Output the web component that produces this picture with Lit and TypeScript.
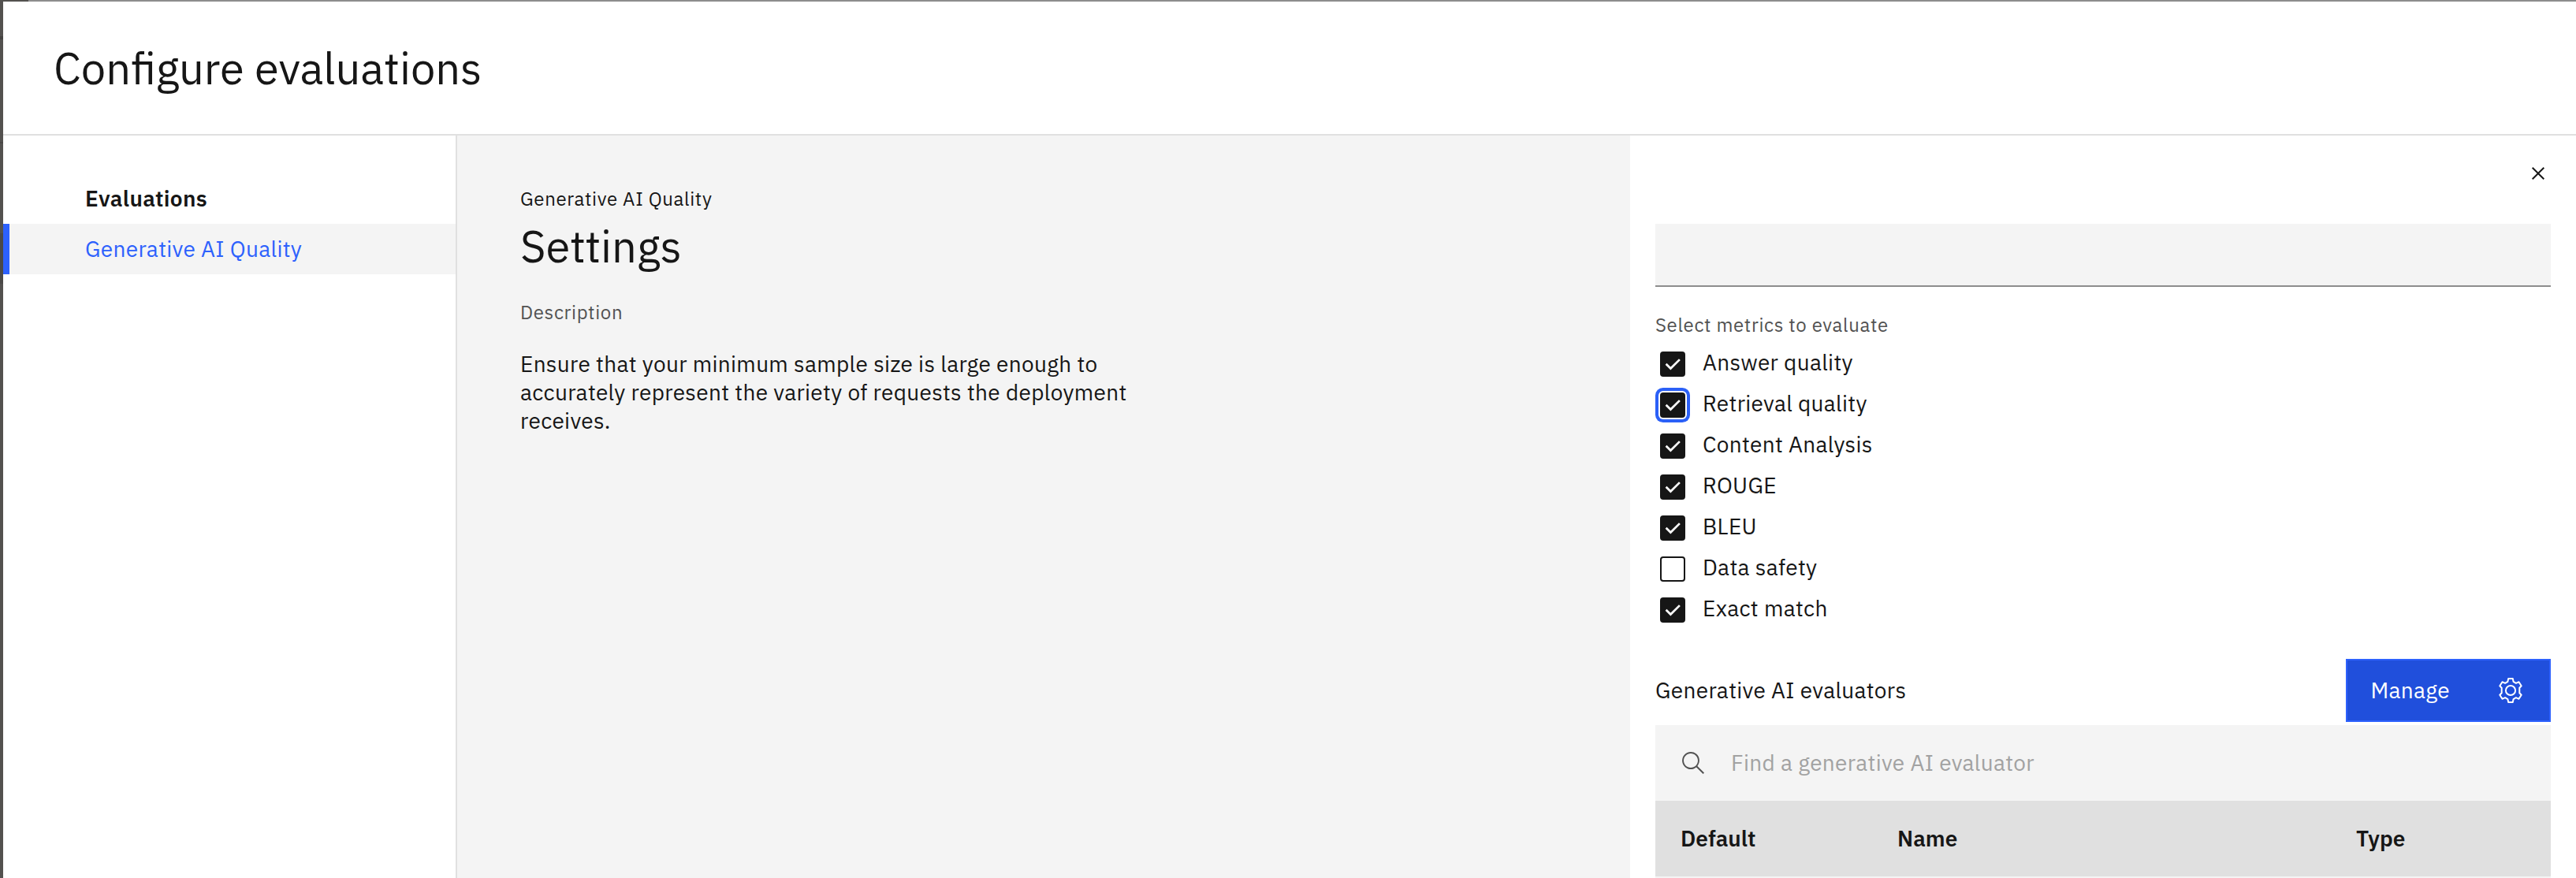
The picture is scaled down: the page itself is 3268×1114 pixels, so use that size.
import { LitElement, html, css } from "lit";

interface Metric {
  label: string;
  checked: boolean;
  focused?: boolean;
}

class MetricCheckbox extends LitElement {
  static properties = {
    label: { type: String },
    checked: { type: Boolean },
    focused: { type: Boolean },
  };
  declare label: string;
  declare checked: boolean;
  declare focused: boolean;

  static styles = css`
    :host {
      display: flex;
      height: 52px;
      padding-left: 6px;
    }
    .box {
      box-sizing: border-box;
      width: 32px;
      height: 32px;
      margin-top: 10px;
      border: 2px solid #161616;
      border-radius: 4px;
      background: #fff;
    }
    .box.on {
      background: #161616;
    }
    .box.focus {
      box-shadow: 0 0 0 2px #fff, 0 0 0 6px #2b60f7;
    }
    .tick {
      display: block;
      width: 28px;
      height: 28px;
      fill: none;
      stroke: #fff;
      stroke-width: 2.7;
    }
    .label {
      margin: 6px 0 0 22px;
      line-height: 35px;
    }
  `;

  render() {
    return html`
      <span class="box ${this.checked ? "on" : ""} ${this.focused ? "focus" : ""}">
        ${this.checked
          ? html`<svg class="tick" viewBox="0 0 28 28"><path d="M5.6 13.8 11.4 19.5 22.9 8.1"></path></svg>`
          : ""}
      </span>
      <span class="label">${this.label}</span>
    `;
  }
}
customElements.define("metric-checkbox", MetricCheckbox);

class AppRoot extends LitElement {
  static styles = css`
    :host {
      display: block;
      height: 1114px;
      overflow: hidden;
      background: #53514f;
      color: #161616;
      font-family: "IBM Plex Sans", "Open Sans", sans-serif;
      font-size: 28px;
      line-height: 36px;
      letter-spacing: 0.32px;
    }
    .frame {
      display: flex;
      height: 1114px;
    }
    .edge {
      flex: none;
      display: flex;
      flex-direction: column;
      width: 4px;
      overflow: hidden;
      background: #53514f;
    }
    .rule {
      flex: none;
      height: 4px;
      margin-top: 46px;
      background: #454341;
    }
    .rule.thin {
      height: 2px;
      margin-top: 130px;
      background: #494745;
    }
    .band {
      flex: none;
      height: 64px;
      margin-top: 114px;
      background: #4b4947;
    }
    .dialog {
      flex: 1;
      display: flex;
      flex-direction: column;
      min-width: 0;
    }
    .shade {
      height: 2px;
      margin-left: 32px;
      background: #8d8d8d;
    }
    .header {
      box-sizing: border-box;
      height: 170px;
      padding: 48px 64px 0;
      background: #fff;
      border-bottom: 2px solid #e0e0e0;
    }
    h1,
    h2,
    p {
      margin: 0;
      font-weight: 400;
    }
    h1,
    h2 {
      font-size: 56px;
      line-height: 72px;
      letter-spacing: 0;
    }
    .body {
      flex: 1;
      display: flex;
      min-height: 0;
    }
    .side {
      box-sizing: border-box;
      width: 576px;
      padding-top: 48px;
      background: #fff;
      border-right: 2px solid #e0e0e0;
    }
    .side-title,
    .side-item {
      height: 64px;
      line-height: 63px;
      padding-left: 104px;
    }
    .side-title {
      font-weight: 600;
    }
    .side-item {
      padding-left: 96px;
      border-left: 8px solid #2d61fd;
      background: #f4f4f4;
      color: #2d61fd;
    }
    .main {
      box-sizing: border-box;
      width: 1488px;
      padding: 64px 80px;
      background: #f4f4f4;
    }
    .small {
      font-size: 24px;
      line-height: 32px;
      letter-spacing: 0.64px;
    }
    .muted {
      color: #525252;
    }
    .main h2 {
      margin-top: 8px;
    }
    .main .muted {
      margin-top: 32px;
    }
    .copy {
      width: 780px;
      margin-top: 31.5px;
    }
    .panel {
      box-sizing: border-box;
      flex: 1;
      padding: 32px 32px 0;
      background: #fff;
      display: flex;
      flex-direction: column;
    }
    .icon {
      display: block;
      flex: none;
      width: 32px;
      height: 32px;
    }
    .close {
      align-self: flex-end;
      fill: #161616;
    }
    .field {
      box-sizing: border-box;
      height: 80px;
      margin-top: 48px;
      flex: none;
      background: #f4f4f4;
      border-bottom: 2px solid #8d8d8d;
    }
    .panel .muted {
      margin: 32px 0 8px;
    }
    .text {
      line-height: 35px;
      padding-bottom: 1px;
    }
    .evaluators {
      display: flex;
      justify-content: space-between;
      align-items: center;
      margin-top: 36px;
      height: 80px;
    }
    .manage {
      box-sizing: border-box;
      display: flex;
      align-items: center;
      justify-content: space-between;
      width: 260px;
      height: 80px;
      padding: 0 33px 0 29.5px;
      border: 2px solid #2d61fd;
      background: #204fdc;
      color: #fff;
    }
    .gear {
      fill: none;
      stroke: #fff;
      stroke-width: 2;
      stroke-linejoin: round;
    }
    .search {
      display: flex;
      align-items: center;
      gap: 32px;
      height: 96px;
      margin-top: 4px;
      padding: 0 32px;
      background: #f4f4f4;
      color: #a2a2a2;
    }
    .search .icon {
      fill: #525252;
    }
    .thead {
      display: grid;
      grid-template-columns: 275px 582px 1fr;
      align-items: center;
      height: 96px;
      background: #e0e0e0;
      font-weight: 600;
      letter-spacing: 0;
    }
    .thead .text {
      padding-left: 32px;
    }
    .row {
      height: 2px;
      background: #f4f4f4;
    }
  `;

  private metrics: Metric[] = [
    { label: "Answer quality", checked: true },
    { label: "Retrieval quality", checked: true, focused: true },
    { label: "Content Analysis", checked: true },
    { label: "ROUGE", checked: true },
    { label: "BLEU", checked: true },
    { label: "Data safety", checked: false },
    { label: "Exact match", checked: true },
  ];

  render() {
    return html`
      <div class="frame">
        <div class="edge">
          <div class="rule"></div>
          <div class="rule thin"></div>
          <div class="band"></div>
        </div>
        <div class="dialog">
          <div class="shade"></div>
          <header class="header"><h1>Configure evaluations</h1></header>
          <div class="body">
            <nav class="side">
              <div class="side-title">Evaluations</div>
              <div class="side-item">Generative AI Quality</div>
            </nav>
            <main class="main">
              <p class="small">Generative AI Quality</p>
              <h2>Settings</h2>
              <p class="small muted">Description</p>
              <p class="copy">
                Ensure that your minimum sample size is large enough to accurately represent the
                variety of requests the deployment receives.
              </p>
            </main>
            <section class="panel">
              <svg class="icon close" viewBox="0 0 32 32">
                <path d="M24 9.4 22.6 8 16 14.6 9.4 8 8 9.4 14.6 16 8 22.6 9.4 24 16 17.4 22.6 24 24 22.6 17.4 16z"></path>
              </svg>
              <div class="field"></div>
              <p class="small muted">Select metrics to evaluate</p>
              <div>
                ${this.metrics.map(
                  (m) => html`<metric-checkbox
                    .label=${m.label}
                    .checked=${m.checked}
                    .focused=${!!m.focused}
                  ></metric-checkbox>`
                )}
              </div>
              <div class="evaluators">
                <span class="text">Generative AI evaluators</span>
                <div class="manage">
                  <span class="text">Manage</span>
                  <svg class="icon gear" viewBox="0 0 32 32">
                    <circle cx="16" cy="16" r="6.1"></circle>
                    <path d="M13.2 1h5.6l.8 3.9 3.3 1.9 3.6-1.6 3.2 5-2.4 2.6v6.4l2.4 2.6-3.2 5-3.6-1.6-3.3 1.9-.8 3.9h-5.6l-.8-3.9-3.3-1.9-3.6 1.6-3.2-5 2.4-2.6v-6.4l-2.4-2.6 3.2-5 3.6 1.6 3.3-1.9z"></path>
                  </svg>
                </div>
              </div>
              <div class="search">
                <svg class="icon" viewBox="0 0 16 16">
                  <path d="M15,14.3L10.7,10c1.9-2.3,1.6-5.8-0.7-7.7S4.2,0.7,2.3,3S0.7,8.8,3,10.7c2,1.7,5,1.7,7,0l4.3,4.3L15,14.3z M2,6.5C2,4,4,2,6.5,2S11,4,11,6.5S9,11,6.5,11S2,9,2,6.5z"></path>
                </svg>
                <span class="text">Find a generative AI evaluator</span>
              </div>
              <div class="thead">
                <span class="text">Default</span><span class="text">Name</span><span class="text">Type</span>
              </div>
              <div class="row"></div>
            </section>
          </div>
        </div>
      </div>
    `;
  }
}
customElements.define("app-root", AppRoot);
